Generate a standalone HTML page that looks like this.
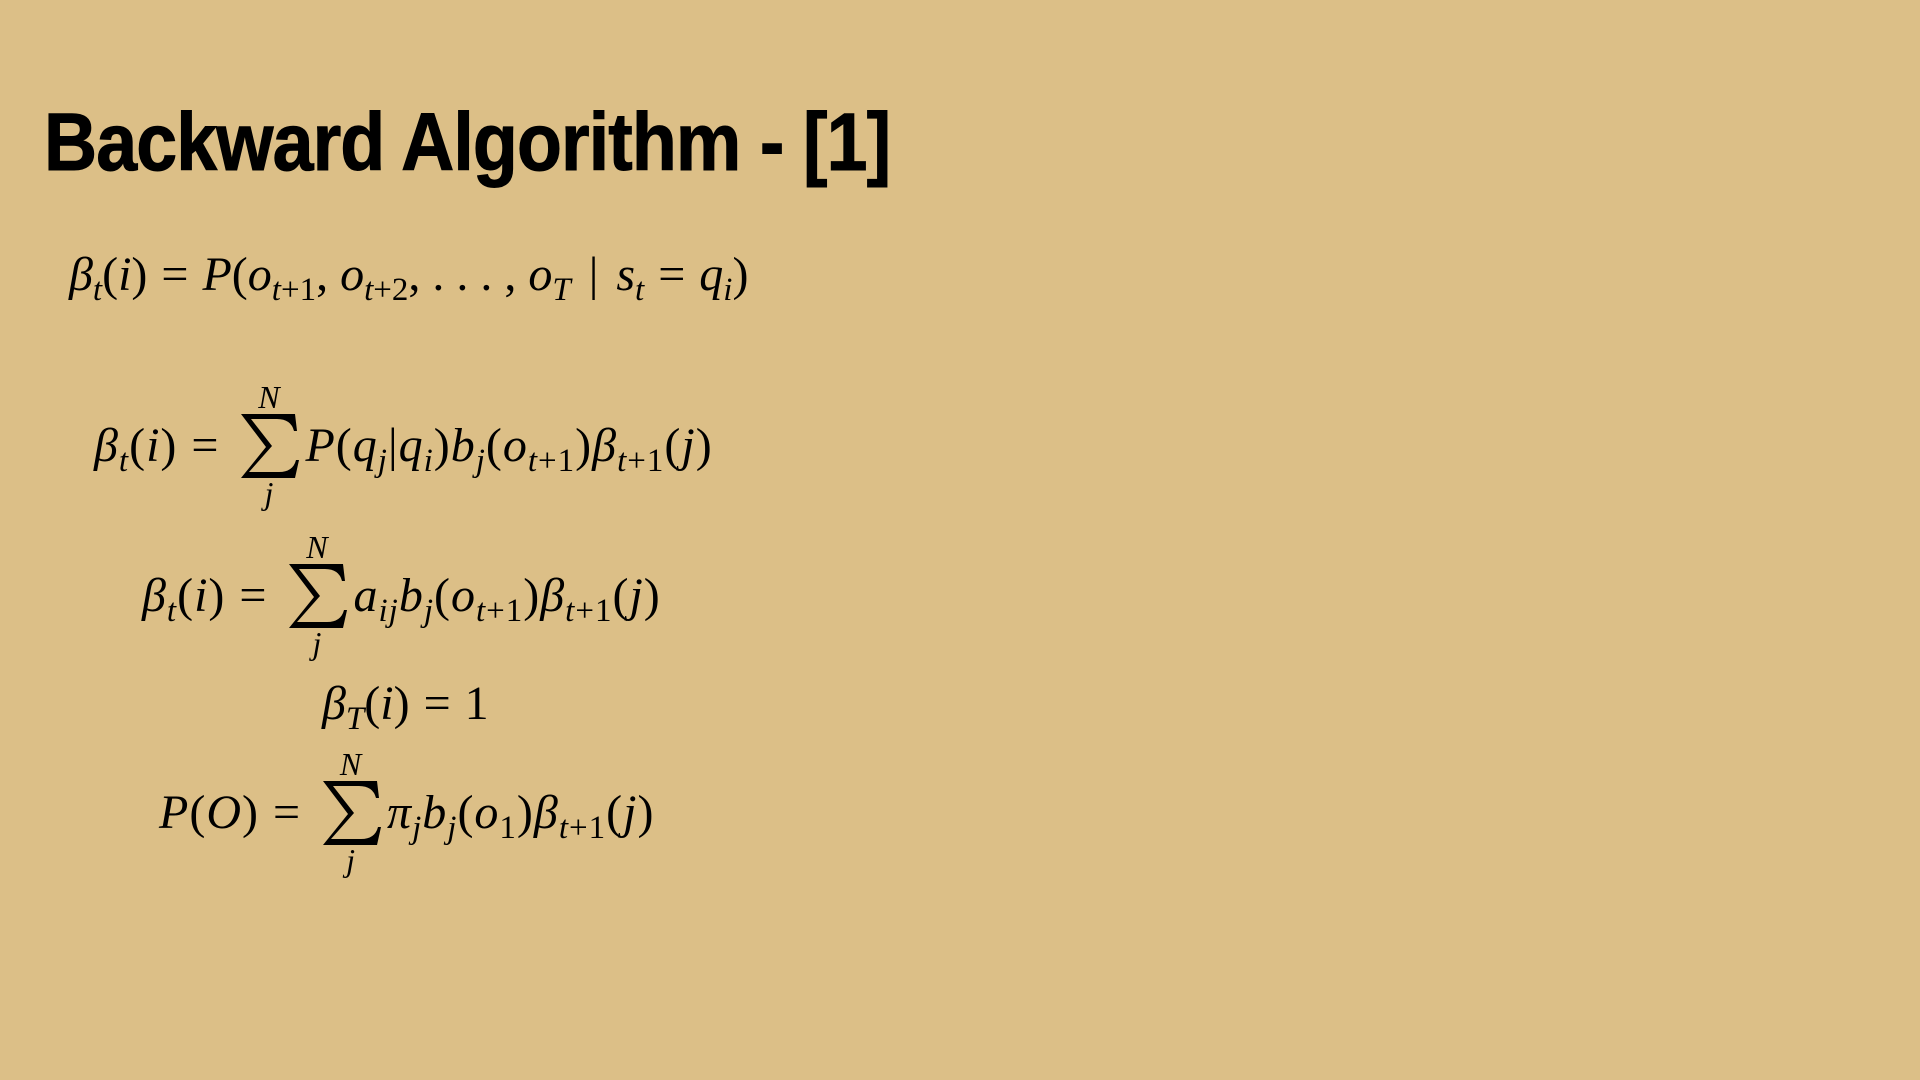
<!DOCTYPE html>
<html><head><meta charset="utf-8"><style>
html,body{margin:0;padding:0}
body{width:1920px;height:1080px;background:#dcbf87;position:relative;overflow:hidden;color:#000}
.t{position:absolute;left:44px;top:96px;font:bold 82px "Liberation Sans",sans-serif;transform:scaleX(0.897);transform-origin:0 0;white-space:nowrap;letter-spacing:-1px;-webkit-text-stroke:1px #000}
.e{position:absolute;font:48px/48px "Liberation Serif",serif;white-space:nowrap}
.e2{letter-spacing:1px}
i{font-style:italic}
sub{font-size:33px;vertical-align:-10px;line-height:0}
.s{display:inline-block;width:64px;height:1px;position:relative;margin:0 4px 0 4px}
.s svg{position:absolute;left:2px;top:-46px}
.s .n,.s .j{position:absolute;left:0;width:64px;text-align:center;font-size:32px;line-height:32px;font-style:italic}
.s .n{top:-79px}
.s .j{top:17px}
.eq{margin:0 14px}
</style></head><body>
<div class="t">Backward Algorithm - [1]</div>

<div class="e" style="left:69px;top:251px"><i>β</i><sub><i>t</i></sub>(<i>i</i>)<span class="eq">=</span><i>P</i>(<i>o</i><sub><i>t</i>+1</sub>, <i>o</i><sub><i>t</i>+2</sub>, . . . , <i>o</i><sub><i>T</i></sub> <span style="margin:0 6px">|</span> <i>s</i><sub><i>t</i></sub><span class="eq">=</span><i>q</i><sub><i>i</i></sub>)</div>

<div class="e e2" style="left:94px;top:422px"><i>β</i><sub><i>t</i></sub>(<i>i</i>)<span class="eq">=</span><span class="s"><span class="n">N</span><svg width="60" height="64" viewBox="0 0 60 64"><path d="M2,0 H56 L58,17 H55 Q52,5 38,5 H12 L33,32 L10,58 H40 Q54,58 57,46 H60 L56,64 H2 L27,33 Z"/></svg><span class="j">j</span></span><i>P</i>(<i>q</i><sub><i>j</i></sub>|<i>q</i><sub><i>i</i></sub>)<i>b</i><sub><i>j</i></sub>(<i>o</i><sub><i>t</i>+1</sub>)<i>β</i><sub><i>t</i>+1</sub>(<i>j</i>)</div>

<div class="e e2" style="left:142px;top:572px"><i>β</i><sub><i>t</i></sub>(<i>i</i>)<span class="eq">=</span><span class="s"><span class="n">N</span><svg width="60" height="64" viewBox="0 0 60 64"><path d="M2,0 H56 L58,17 H55 Q52,5 38,5 H12 L33,32 L10,58 H40 Q54,58 57,46 H60 L56,64 H2 L27,33 Z"/></svg><span class="j">j</span></span><i>a</i><sub><i>ij</i></sub><i>b</i><sub><i>j</i></sub>(<i>o</i><sub><i>t</i>+1</sub>)<i>β</i><sub><i>t</i>+1</sub>(<i>j</i>)</div>

<div class="e" style="left:322px;top:680px"><i>β</i><sub><i>T</i></sub>(<i>i</i>)<span class="eq">=</span>1</div>

<div class="e e2" style="left:159px;top:789px"><i>P</i>(<i>O</i>)<span class="eq">=</span><span class="s"><span class="n">N</span><svg width="60" height="64" viewBox="0 0 60 64"><path d="M2,0 H56 L58,17 H55 Q52,5 38,5 H12 L33,32 L10,58 H40 Q54,58 57,46 H60 L56,64 H2 L27,33 Z"/></svg><span class="j">j</span></span><i>π</i><sub><i>j</i></sub><i>b</i><sub><i>j</i></sub>(<i>o</i><sub>1</sub>)<i>β</i><sub><i>t</i>+1</sub>(<i>j</i>)</div>
</body></html>
